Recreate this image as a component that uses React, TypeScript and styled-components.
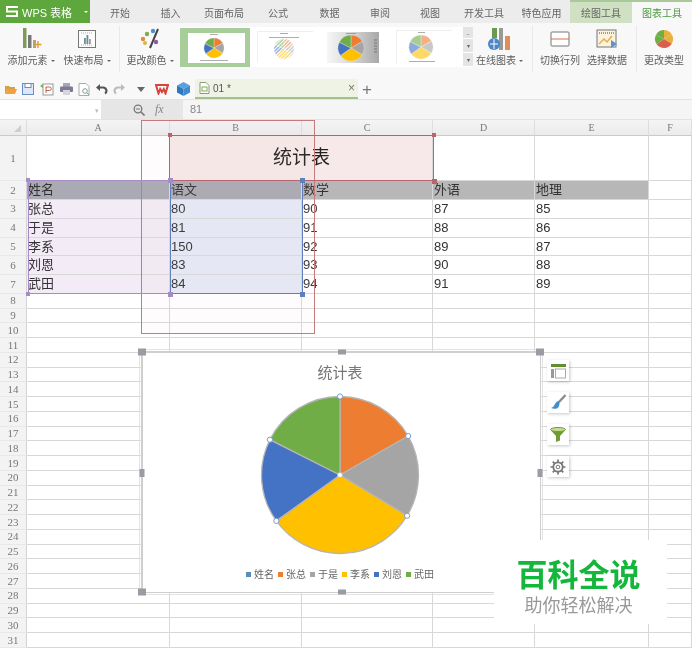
import React from "react";
import styled, { createGlobalStyle } from "styled-components";

const CJK = `"Noto Sans CJK SC", "Liberation Sans", sans-serif`;
const NUM = `"Liberation Sans", "Noto Sans CJK SC", sans-serif`;

const Global = createGlobalStyle`
  html, body { margin: 0; padding: 0; background: #fff; overflow: hidden; }
`;

const Page = styled.div`
  width: 692px; height: 649px; overflow: hidden; position: relative;
  display: flex; flex-direction: column; font-family: ${CJK}; background: #fff;
  filter: blur(0.35px);
`;

/* ---------- title tabs ---------- */
const TabBar = styled.div`
  height: 23px; display: flex; background: #ececec; flex: none;
`;
const AppButton = styled.div`
  width: 90px; background: #5ea73c; color: #fff; display: flex; align-items: center; white-space: nowrap;
  font: 11px ${NUM}; gap: 3px; padding-left: 5px; box-sizing: border-box; margin-right: 5px; flex: none;
`;
const AppCaret = styled.span`
  width: 0; height: 0; border-left: 2px solid transparent; border-right: 2px solid transparent;
  border-top: 2px solid #fff; margin-left: 9px;
`;
const Tab = styled.div<{ $w: number; $state?: "draw" | "chart" }>`
  width: ${p => p.$w}px; display: flex; align-items: center; justify-content: center; flex: none;
  font-size: 10px; line-height: 1; padding-top: ${p => (p.$state ? 1 : 3)}px; box-sizing: border-box;
  color: ${p => (p.$state === "chart" ? "#4d9a45" : "#666")};
  background: ${p => (p.$state === "chart" ? "#f8f8f8" : p.$state === "draw" ? "#cfe0c3" : "transparent")};
  border-top: ${p => (p.$state ? "2px solid #a9c99a" : "none")};
`;

/* ---------- ribbon ---------- */
const Ribbon = styled.div`
  height: 56px; background: #f8f8f8; display: flex; align-items: flex-start; flex: none; box-sizing: border-box;
`;
const RibbonItem = styled.div<{ $w: number }>`
  width: ${p => p.$w}px; height: 50px; display: flex; flex-direction: column; align-items: center;
  padding-top: 4px; box-sizing: border-box; font-size: 10px; color: #5c5c5c; white-space: nowrap; flex: none;
`;
const IconSlot = styled.div`
  height: 24px; display: flex; align-items: center; justify-content: center; margin-bottom: 1px;
`;
const Caret = styled.span`
  display: inline-block; width: 0; height: 0; margin-left: 3px; vertical-align: middle;
  border-left: 2px solid transparent; border-right: 2px solid transparent; border-top: 2px solid #666;
`;
const Sep = styled.div<{ $ml: number }>`
  width: 1px; height: 46px; background: #e9e9e9; margin: 3px 0 0 ${p => p.$ml}px; flex: none;
`;
const Gallery = styled.div`
  margin-top: 4px; width: 283px; height: 40px; background: #fff; display: flex; align-items: center; flex: none;
`;
const ThumbSel = styled.div`
  flex: none; width: 70px; height: 39px; box-sizing: border-box; display: flex;
  border-style: solid; border-color: #a8cc9a; border-width: 5px 5px 4px 8px;
`;
const Thumb = styled.div<{ $ml: number }>`
  flex: none; margin-left: ${p => p.$ml}px; display: flex;
`;
const GalleryScroll = styled.div`
  width: 10px; height: 40px; margin-top: 4px; background: #e4e4e4; flex: none;
  display: grid; grid-template-rows: 12px 14px 14px; color: #666; font-size: 6px; line-height: 13px; text-align: center;
  & > span { border-bottom: 1px solid #fff; }
`;

/* ---------- quick bar ---------- */
const QuickBar = styled.div`
  height: 21px; background: #f8f8f8; display: flex; align-items: center; padding: 0 0 0 3px; box-sizing: border-box;
  border-bottom: 1px solid #e3e3e3; flex: none;
`;
const Quick = styled.div<{ $w: number }>`
  width: ${p => p.$w}px; height: 20px; display: flex; align-items: center; justify-content: center; flex: none;
`;
const DocTab = styled.div`
  width: 163px; height: 20px; margin-left: -1px; background: #eef3e6; border-bottom: 2px solid #a3c08d; box-sizing: border-box;
  display: flex; align-items: center; padding: 0 3px 0 4px; gap: 3px; font: 10px ${NUM}; color: #555; flex: none;
`;
const DocName = styled.span` flex: 1; `;
const DocClose = styled.span` color: #777; font-size: 12px; line-height: 1; `;
const Plus = styled.span`
  margin-left: 4px; color: #777; font: 17px ${NUM}; line-height: 1;
`;

/* ---------- formula bar ---------- */
const FormulaBar = styled.div`
  height: 20px; display: flex; background: #f5f5f5; border-bottom: 1px solid #e2e2e2; box-sizing: border-box; flex: none;
`;
const NameBox = styled.div`
  width: 101px; background: #fff; color: #bbb; font-size: 7px; display: flex; align-items: center; justify-content: flex-end; padding-right: 2px; box-sizing: border-box;
`;
const FxBox = styled.div`
  width: 82px; background: #e6e6e6; display: flex; align-items: center; padding-left: 32px; gap: 10px; box-sizing: border-box;
`;
const Fx = styled.span` font: italic 12px "Liberation Serif", serif; color: #888; `;
const FormulaText = styled.div` padding-left: 7px; font: 11px/19px ${NUM}; color: #888; `;

/* ---------- sheet ---------- */
const Sheet = styled.div`
  position: relative; flex: 1; overflow: hidden;
  display: grid;
  grid-template-columns: 27px 143px 132px 131px 102px 114px 43px;
  grid-template-rows: 16px 45px 19px repeat(5, 18.8px) repeat(24, 14.75px);
`;
const ColHead = styled.div`
  background: linear-gradient(#f4f4f4,#ececec); border-right: 1px solid #dedede; border-bottom: 1px solid #cacaca; box-sizing: border-box;
  font: 10px/15px "Liberation Serif", serif; color: #777; text-align: center;
`;
const Corner = styled(ColHead)` position: relative; `;
const CornerMark = styled.span`
  position: absolute; right: 5px; bottom: 3px; width: 0; height: 0;
  border-left: 7px solid transparent; border-bottom: 7px solid #cfcfcf;
`;
const RowHead = styled.div`
  background: #f3f3f3; border-right: 1px solid #d4d4d4; border-bottom: 1px solid #e8e8e8; box-sizing: border-box;
  font: 11px/1 "Liberation Serif", serif; color: #777; display: flex; align-items: center; justify-content: center; overflow: hidden;
`;
type Tone = "none" | "head" | "headSel" | "purple" | "blue" | "title";
const tones: Record<Tone, string> = {
  none: "#fff", head: "#b7b7b7", headSel: "#a9aab3", purple: "#f3ecf6", blue: "#e5eaf7", title: "#f7e9e9",
};
const Cell = styled.div<{ $tone: Tone; $span?: number }>`
  background: ${p => tones[p.$tone]};
  ${p => (p.$span ? `grid-column: span ${p.$span};` : "")}
  border-right: 1px solid #d8d8d8; border-bottom: 1px solid #d8d8d8; box-sizing: border-box;
  font: 13px/18px ${NUM}; color: #333; padding-left: 1px; white-space: nowrap; overflow: hidden;
`;
const TitleCell = styled(Cell)`
  font-size: 19px; display: flex; align-items: center; justify-content: center; color: #222;
`;
const Range = styled.div<{ $x: number; $y: number; $w: number; $h: number; $c: string }>`
  position: absolute; left: ${p => p.$x}px; top: ${p => p.$y}px; width: ${p => p.$w}px; height: ${p => p.$h}px;
  box-sizing: border-box; border: 1.5px solid ${p => p.$c}; pointer-events: none;
`;
const Dot = styled.i<{ $c: string; $x: number; $y: number; $s?: number }>`
  position: absolute; width: ${p => p.$s ?? 4}px; height: ${p => p.$s ?? 4}px; background: ${p => p.$c};
  left: ${p => p.$x}px; top: ${p => p.$y}px;
`;
const RedBox = styled.div`
  position: absolute; left: 141px; top: 0; width: 174px; height: 214px; box-sizing: border-box; border: 1px solid #c47b7b; background: rgba(240,190,190,.05);
`;

/* ---------- chart ---------- */
const Chart = styled.div`
  position: absolute; left: 141px; top: 231px; width: 400px; height: 242px; box-sizing: border-box;
  background: #fff; border: 2px solid #cfcfcf; border-right-width: 1px; border-bottom-width: 1px; outline: 1px solid #e3e3e3; outline-offset: 1px;
  display: flex; flex-direction: column; align-items: center; padding-top: 9px;
`;
const ChartTitle = styled.div`
  font-size: 15px; line-height: 20px; color: #777; margin-right: 3px;
`;
const PieWrap = styled.div`
  margin-top: 8px; height: 170px; margin-right: 3px;
`;
const Legend = styled.div`
  margin-top: 7px; display: flex; gap: 4px; font-size: 10px; line-height: 14px; color: #666; margin-right: 3px;
`;
const LegendItem = styled.span`
  display: flex; align-items: center; gap: 3px;
`;
const Swatch = styled.i<{ $c: string }>`
  width: 5px; height: 5px; background: ${p => p.$c}; display: block;
`;
const Handle = styled.i<{ $x: string; $y: string; $w: number; $h: number }>`
  position: absolute; background: #9b9ba3; width: ${p => p.$w}px; height: ${p => p.$h}px;
  left: ${p => p.$x}; top: ${p => p.$y}; transform: translate(-50%, -50%);
`;
const SideTools = styled.div`
  position: absolute; left: 547px; top: 240px; display: flex; flex-direction: column; gap: 11px;
`;
const SideBtn = styled.div`
  width: 22px; height: 21px; background: #fff; box-shadow: 1px 1px 3px rgba(0,0,0,.22); display: flex; align-items: center; justify-content: center;
`;
const Watermark = styled.div`
  position: absolute; left: 494px; top: 420px; width: 173px; height: 84px; background: #fff;
  display: flex; flex-direction: column; align-items: center; padding: 15px 4px 0 0; box-sizing: border-box;
`;
const WmTitle = styled.div`
  font-size: 31px; line-height: 36px; font-weight: 700; color: #14b63c; white-space: nowrap;
`;
const WmSub = styled.div`
  font-size: 18px; line-height: 24px; color: #999; white-space: nowrap; margin-top: 1px;
`;

/* ---------- drawings ---------- */
const COLORS = ["#ed7d31", "#a5a5a5", "#ffc000", "#4472c4", "#70ad47"];
const VALUES = [80, 81, 150, 83, 84];
const pt = (cx: number, cy: number, r: number, deg: number) => {
  const a = (deg * Math.PI) / 180;
  return [cx + r * Math.sin(a), cy - r * Math.cos(a)];
};
function slices(cx: number, cy: number, r: number) {
  const total = VALUES.reduce((a, b) => a + b, 0);
  let acc = 0;
  return VALUES.map((v, i) => {
    const s = acc;
    acc += (v / total) * 360;
    const [x1, y1] = pt(cx, cy, r, s);
    const [x2, y2] = pt(cx, cy, r, acc);
    return { d: `M${cx} ${cy}L${x1} ${y1}A${r} ${r} 0 ${acc - s > 180 ? 1 : 0} 1 ${x2} ${y2}Z`, c: COLORS[i], x: x1, y: y1 };
  });
}
function MiniPie({ r, colors }: { r: number; colors: string[] }) {
  const c = r + 1;
  return (
    <svg width={c * 2} height={c * 2}>
      {slices(c, c, r).map((s, i) => <path key={i} d={s.d} fill={colors[i]} />)}
    </svg>
  );
}
type ThumbProps = {
  w: number; h: number; cx: number; cy: number; r: number; op?: number; hatch?: boolean; grad?: boolean; frame?: boolean;
  dashes: [number, number, number][]; side?: boolean;
};
function ThumbArt({ w, h, cx, cy, r, op = 1, hatch, grad, frame, dashes, side }: ThumbProps) {
  return (
    <svg width={w} height={h} style={{ display: "block" }}>
      <defs>
        <linearGradient id="thumbGrad" x1="0" x2="1" y1="0" y2="0">
          <stop offset="0" stopColor="#f6f6f6" /><stop offset=".45" stopColor="#d9d9d9" /><stop offset="1" stopColor="#a8a8a8" />
        </linearGradient>
        <pattern id="hatch" width="2.5" height="2.5" patternUnits="userSpaceOnUse" patternTransform="rotate(45)">
          <rect width="1.1" height="2.5" fill="#fff" />
        </pattern>
      </defs>
      <rect width={w} height={h} fill={grad ? "url(#thumbGrad)" : "#fff"} />
      {frame && <path d={`M.5 ${h}V.5H${w - 6}`} stroke="#eee" fill="none" />}
      <g opacity={op}>
        {slices(cx, cy, r).map((s, i) => <path key={i} d={s.d} fill={s.c} stroke="#ddd" strokeWidth={0.4} />)}
      </g>
      {hatch && <circle cx={cx} cy={cy} r={r + 0.5} fill="url(#hatch)" />}
      {dashes.map(([x, y, l], i) => <rect key={i} x={x} y={y} width={l} height={1} fill="#777" opacity={0.6} />)}
      {side && [0, 3, 6, 9, 12].map(d => <rect key={d} x={w - 5} y={h / 2 - 8 + d} width={3} height={1} fill="#777" />)}
    </svg>
  );
}
function BigPie() {
  const cx = 85, cy = 85, r = 78.5;
  const sl = slices(cx, cy, r);
  return (
    <svg width={170} height={170} style={{ display: "block" }}>
      {sl.map((s, i) => (
        <path key={i} d={s.d} fill={s.c} stroke="#b5b5b5" strokeWidth={1.3} strokeLinejoin="round" />
      ))}
      {sl.map((s, i) => (
        <circle key={i} cx={s.x} cy={s.y} r={2.6} fill="#fff" stroke="#6c93cc" strokeWidth={0.9} />
      ))}
      <circle cx={cx} cy={cy} r={2.6} fill="#fff" stroke="#b5b5b5" strokeWidth={0.9} />
    </svg>
  );
}

const IconAdd = () => (
  <svg width="24" height="24" viewBox="0 0 24 24">
    <rect x="4" y="1" width="3.5" height="20" fill="#7e9a55" /><rect x="9" y="8" width="3.5" height="13" fill="#777" /><rect x="14" y="13" width="3" height="8" fill="#b9a565" />
    <path d="M19 14v7M15.500 17.500h7" stroke="#e39a3c" strokeWidth="1.400" />
  </svg>
);
const IconLayout = () => (
  <svg width="20" height="20" viewBox="0 0 20 20">
    <rect x="1.5" y="1.5" width="17" height="17" fill="#fdfdfd" stroke="#777" /><path d="M4 4h12M4 16h12" stroke="#aaa" strokeDasharray="1 1" />
    <rect x="7" y="9" width="1.8" height="6" fill="#6c8a9a" /><rect x="9.5" y="6" width="1.8" height="9" fill="#6c8a9a" /><rect x="12" y="10" width="1.8" height="5" fill="#9a9a9a" />
  </svg>
);
const IconColor = () => (
  <svg width="22" height="22" viewBox="0 0 22 22">
    <path d="M19 1L11 20" stroke="#444" strokeWidth="2" /><circle cx="4" cy="11" r="2.2" fill="#e58b34" /><circle cx="8" cy="6" r="2.2" fill="#7cae4b" />
    <circle cx="14" cy="3" r="2.2" fill="#4d8fcf" /><circle cx="17" cy="14" r="2.2" fill="#8c5ca8" /><circle cx="6" cy="15" r="2" fill="#d2b84c" />
  </svg>
);
const IconOnline = () => (
  <svg width="24" height="24" viewBox="0 0 24 24">
    <rect x="4" y="1" width="5" height="10" fill="#6c9a4d" /><rect x="11" y="1" width="4" height="22" fill="#999" /><rect x="17" y="9" width="5" height="14" fill="#e08d5a" />
    <circle cx="6" cy="17" r="6" fill="#4d86c6" /><path d="M2 17h8M6 12v10" stroke="#fff" strokeWidth="1" />
  </svg>
);
const IconSwitch = () => (
  <svg width="20" height="16" viewBox="0 0 20 16">
    <rect x="1" y="1" width="18" height="14" rx="1" fill="#fff" stroke="#777" /><path d="M1 8h18" stroke="#d9723f" strokeWidth="1" />
  </svg>
);
const IconData = () => (
  <svg width="22" height="20" viewBox="0 0 22 20">
    <rect x="1" y="1" width="19" height="17" fill="#fbf3dd" stroke="#777" /><path d="M3 4h15" stroke="#999" strokeDasharray="1 1" strokeWidth="2" />
    <path d="M3 15l5-5 3 3 5-6" stroke="#e3b04b" strokeWidth="1.5" fill="none" /><path d="M15 11l6 4-6 4z" fill="#5c93cc" />
  </svg>
);
const IconFolder = () => (
  <svg width="12" height="11" viewBox="0 0 12 11"><path d="M0 2h4l1 1h5v2H3L0 10z" fill="#d9a042" /><path d="M3 5h9l-2 5H0z" fill="#f0a13c" /></svg>
);
const IconSave = () => (
  <svg width="12" height="12" viewBox="0 0 12 12"><rect x=".5" y=".5" width="11" height="11" fill="#dfe7f6" stroke="#6a8ec4" /><rect x="3" y=".5" width="6" height="4" fill="#fff" stroke="#6a8ec4" /></svg>
);
const IconSaveAs = () => (
  <svg width="14" height="13" viewBox="0 0 14 13"><rect x="3" y="1" width="10" height="11" fill="#fff" stroke="#999" /><path d="M6 10V4h3.5a1.7 1.7 0 010 3.5H6" stroke="#c0614c" fill="none" /><path d="M0 3l3-2v4z" fill="#7cae4b" /></svg>
);
const IconPrint = () => (
  <svg width="13" height="12" viewBox="0 0 13 12"><rect x="3" y="0" width="7" height="4" fill="#a9a5b8" /><rect x="0" y="3.5" width="13" height="5.5" rx="1" fill="#7f7a92" /><rect x="3" y="7" width="7" height="5" fill="#d7d4de" /></svg>
);
const IconPreview = () => (
  <svg width="13" height="13" viewBox="0 0 13 13"><path d="M1 .5h7l3 3v9H1z" fill="#fff" stroke="#aaa" /><circle cx="7" cy="8" r="2.3" fill="none" stroke="#7d9a9c" /><path d="M9 10l2 2" stroke="#7d9a9c" /></svg>
);
const IconUndo = () => (
  <svg width="12" height="12" viewBox="0 0 12 12"><path d="M3 4.500h4a3.300 3.300 0 012 6" stroke="#555" strokeWidth="2.200" fill="none" /><path d="M0 4.500L4 1v7z" fill="#555" /></svg>
);
const IconRedo = () => (
  <svg width="12" height="12" viewBox="0 0 12 12"><path d="M9 4.500H5a3.300 3.300 0 00-2 6" stroke="#bbb" strokeWidth="2.200" fill="none" /><path d="M12 4.500L8 1v7z" fill="#bbb" /></svg>
);
const IconDown = () => (
  <svg width="8" height="5" viewBox="0 0 8 5"><path d="M0 0h8L4 5z" fill="#666" /></svg>
);
const IconWps = () => (
  <svg width="14" height="11" viewBox="0 0 14 11"><path d="M1 1h12l-2.500 8.500L8.800 5 7 8 5.200 5 3.500 9.500z" fill="none" stroke="#d6443f" strokeWidth="2" /></svg>
);
const IconCube = () => (
  <svg width="13" height="14" viewBox="0 0 13 14"><path d="M6.500 0L13 3.500 6.500 7 0 3.500z" fill="#5aa0dc" /><path d="M0 3.500L6.500 7v7L0 10.500z" fill="#2f77bd" /><path d="M13 3.500L6.500 7v7l6.500-3.500z" fill="#3f8bd0" /></svg>
);
const IconDoc = () => (
  <svg width="11" height="12" viewBox="0 0 11 12"><path d="M1 .5h6l3 3v8H1z" fill="#fff" stroke="#8a9a80" /><rect x="3" y="5" width="5" height="4" fill="none" stroke="#7cae4b" /></svg>
);
const IconZoom = () => (
  <svg width="12" height="12" viewBox="0 0 12 12"><circle cx="5" cy="5" r="3.800" fill="none" stroke="#777" strokeWidth="1.300" /><path d="M8 8l3.500 3.500" stroke="#777" strokeWidth="1.600" /><path d="M3 5h4" stroke="#777" /></svg>
);
const IconElements = () => (
  <svg width="16" height="16" viewBox="0 0 16 16"><rect x="1" y="1" width="15" height="3" fill="#5f8f2f" /><rect x="1" y="6" width="3" height="9" fill="#999" /><rect x="5.500" y="6" width="10" height="9" fill="#fff" stroke="#aaa" /></svg>
);
const IconBrush = () => (
  <svg width="17" height="17" viewBox="0 0 17 17"><path d="M15.500 1L9 8" stroke="#8c8c8c" strokeWidth="2.400" /><path d="M9.500 7c-3 0-4 2-5 4-.7 1.500-2 2.500-3.500 3 3 1.500 7 1 8-2 .5-1.700.8-3.500.5-5z" fill="#3f8fcf" /></svg>
);
const IconFunnel = () => (
  <svg width="16" height="15" viewBox="0 0 16 15"><ellipse cx="8" cy="2.500" rx="7.500" ry="2" fill="#c8dc9a" stroke="#6f9a35" /><path d="M1 3.500L6 9v6l4-1.500V9l5-5.500c-3 1.500-11 1.500-14 0z" fill="#6f9a35" /></svg>
);
const IconGear = () => (
  <svg width="16" height="16" viewBox="0 0 16 16">
    <circle cx="8" cy="8" r="4.700" fill="none" stroke="#777" strokeWidth="1.800" /><circle cx="8" cy="8" r="1.800" fill="none" stroke="#777" />
    <path d="M8 .5v3M8 12.500v3M.5 8h3M12.500 8h3M2.700 2.700l2 2M11.300 11.300l2 2M13.300 2.700l-2 2M4.700 11.300l-2 2" stroke="#777" strokeWidth="1.700" />
  </svg>
);
const LogoS = () => (
  <svg width="14" height="11" viewBox="0 0 14 11"><path d="M13 1H2v4.500h10V10H1" fill="none" stroke="#fff" strokeWidth="1.900" /></svg>
);

const TABS: [string, number][] = [["开始", 50], ["插入", 51], ["页面布局", 56], ["公式", 52], ["数据", 51], ["审阅", 50], ["视图", 50], ["开发工具", 58], ["特色应用", 57]];
const COLS = ["A", "B", "C", "D", "E", "F"];
const DATA: string[][] = [
  ["姓名", "语文", "数学", "外语", "地理", ""],
  ["张总", "80", "90", "87", "85", ""],
  ["于是", "81", "91", "88", "86", ""],
  ["李系", "150", "92", "89", "87", ""],
  ["刘恩", "83", "93", "90", "88", ""],
  ["武田", "84", "94", "91", "89", ""],
];
const LEGEND: [string, string][] = [["姓名", "#5b8db8"], ["张总", "#ed7d31"], ["于是", "#a5a5a5"], ["李系", "#ffc000"], ["刘恩", "#4472c4"], ["武田", "#70ad47"]];

const toneFor = (r: number, c: number): Tone => {
  if (r === 0) return c === 5 ? "none" : c === 0 || c === 1 ? "headSel" : "head";
  if (c === 0) return "purple";
  if (c === 1) return "blue";
  return "none";
};

export default function App() {
  return (
    <Page>
      <Global />
      <TabBar>
        <AppButton><LogoS />WPS 表格<AppCaret /></AppButton>
        {TABS.map(([t, w]) => <Tab key={t} $w={w}>{t}</Tab>)}
        <Tab $w={62} $state="draw">绘图工具</Tab>
        <Tab $w={60} $state="chart">图表工具</Tab>
      </TabBar>
      <Ribbon>
        <RibbonItem $w={62}><IconSlot><IconAdd /></IconSlot><span>添加元素<Caret /></span></RibbonItem>
        <RibbonItem $w={50}><IconSlot><IconLayout /></IconSlot><span>快速布局<Caret /></span></RibbonItem>
        <Sep $ml={7} />
        <RibbonItem $w={60}><IconSlot><IconColor /></IconSlot><span>更改颜色<Caret /></span></RibbonItem>
        <Gallery>
          <ThumbSel><ThumbArt w={57} h={30} cx={26} cy={15} r={10} dashes={[[22, 1, 8], [12, 27, 28]]} /></ThumbSel>
          <Thumb $ml={7}><ThumbArt w={62} h={32} cx={27} cy={18} r={10} op={0.6} hatch frame dashes={[[23, 2, 8], [12, 6, 30]]} /></Thumb>
          <Thumb $ml={8}><ThumbArt w={52} h={31} cx={24} cy={16} r={13} grad side dashes={[[19, 1, 10]]} /></Thumb>
          <Thumb $ml={17}><ThumbArt w={62} h={34} cx={25} cy={17} r={12} op={0.6} frame dashes={[[22, 2, 7], [13, 31, 26]]} /></Thumb>
        </Gallery>
        <GalleryScroll><span>–</span><span>▾</span><span>▾</span></GalleryScroll>
        <RibbonItem $w={53}><IconSlot><IconOnline /></IconSlot><span>在线图表<Caret /></span></RibbonItem>
        <Sep $ml={6} />
        <RibbonItem $w={54}><IconSlot><IconSwitch /></IconSlot><span>切换行列</span></RibbonItem>
        <RibbonItem $w={40}><IconSlot><IconData /></IconSlot><span>选择数据</span></RibbonItem>
        <Sep $ml={9} />
        <RibbonItem $w={54}><IconSlot><MiniPie r={9} colors={["#e8b13c", "#e8b13c", "#d9604c", "#70ad47", "#70ad47"]} /></IconSlot><span>更改类型</span></RibbonItem>
      </Ribbon>
      <QuickBar>
        <Quick $w={16}><IconFolder /></Quick>
        <Quick $w={18}><IconSave /></Quick>
        <Quick $w={20}><IconSaveAs /></Quick>
        <Quick $w={18}><IconPrint /></Quick>
        <Quick $w={18}><IconPreview /></Quick>
        <Quick $w={17}><IconUndo /></Quick>
        <Quick $w={18}><IconRedo /></Quick>
        <Quick $w={26}><IconDown /></Quick>
        <Quick $w={16}><IconWps /></Quick>
        <Quick $w={26}><IconCube /></Quick>
        <DocTab><IconDoc /><DocName>01 *</DocName><DocClose>×</DocClose></DocTab>
        <Plus>+</Plus>
      </QuickBar>
      <FormulaBar>
        <NameBox>▾</NameBox>
        <FxBox><IconZoom /><Fx>fx</Fx></FxBox>
        <FormulaText>81</FormulaText>
      </FormulaBar>
      <Sheet>
        <Corner><CornerMark /></Corner>
        {COLS.map(c => <ColHead key={c}>{c}</ColHead>)}

        <RowHead>1</RowHead>
        <Cell $tone="none" />
        <TitleCell $tone="title" $span={2}>统计表</TitleCell>
        <Cell $tone="none" /><Cell $tone="none" /><Cell $tone="none" />

        {DATA.map((row, r) => (
          <React.Fragment key={r}>
            <RowHead>{r + 2}</RowHead>
            {row.map((v, c) => <Cell key={c} $tone={toneFor(r, c)}>{v}</Cell>)}
          </React.Fragment>
        ))}
        {Array.from({ length: 24 }, (_, i) => (
          <React.Fragment key={i}>
            <RowHead>{i + 8}</RowHead>
            {COLS.map(c => <Cell key={c} $tone="none" />)}
          </React.Fragment>
        ))}

        <RedBox />
        <Range $x={28} $y={60} $w={143} $h={114} $c="#a58cc4" />
        <Range $x={170} $y={60} $w={133} $h={114} $c="#5f80bd" />
        <Range $x={169} $y={15} $w={265} $h={46} $c="#b8646e" />
        <Dot $c="#a58cc4" $x={26} $y={58} />
        <Dot $c="#a58cc4" $x={26} $y={172} />
        <Dot $c="#a58cc4" $x={168} $y={58} $s={5} />
        <Dot $c="#a58cc4" $x={168} $y={172} $s={5} />
        <Dot $c="#5f80bd" $x={300} $y={58} $s={5} />
        <Dot $c="#5f80bd" $x={300} $y={172} $s={5} />
        <Dot $c="#b8646e" $x={168} $y={13} />
        <Dot $c="#b8646e" $x={432} $y={13} />
        <Dot $c="#b8646e" $x={432} $y={59} $s={5} />

        <Chart>
          <ChartTitle>统计表</ChartTitle>
          <PieWrap><BigPie /></PieWrap>
          <Legend>
            {LEGEND.map(([t, c]) => <LegendItem key={t}><Swatch $c={c} />{t}</LegendItem>)}
          </Legend>
          <Handle $x="-1px" $y="-1px" $w={8} $h={7} />
          <Handle $x="50%" $y="-1px" $w={8} $h={5} />
          <Handle $x="100%" $y="-1px" $w={8} $h={7} />
          <Handle $x="-1px" $y="50%" $w={5} $h={8} />
          <Handle $x="100%" $y="50%" $w={5} $h={8} />
          <Handle $x="-1px" $y="100%" $w={8} $h={7} />
          <Handle $x="50%" $y="100%" $w={8} $h={5} />
        </Chart>
        <SideTools>
          <SideBtn><IconElements /></SideBtn>
          <SideBtn><IconBrush /></SideBtn>
          <SideBtn><IconFunnel /></SideBtn>
          <SideBtn><IconGear /></SideBtn>
        </SideTools>
        <Watermark>
          <WmTitle>百科全说</WmTitle>
          <WmSub>助你轻松解决</WmSub>
        </Watermark>
      </Sheet>
    </Page>
  );
}
